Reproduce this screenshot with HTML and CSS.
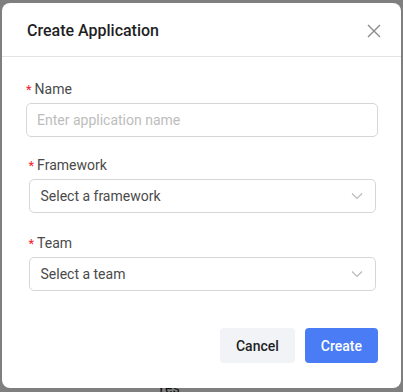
FILE: index.html
```html
<!DOCTYPE html>
<html lang="en">
<head>
    <meta charset="UTF-8">
    <meta name="viewport" content="width=device-width, initial-scale=1.0">
    <title>Create Application</title>
    <link rel="stylesheet" href="styles.css">
</head>
<body>
    <div class="page">
        <div class="page-row">Yes</div>
    </div>

    <div class="overlay">
        <div class="modal">
            <div class="modal-header">
                <h2 class="modal-title">Create Application</h2>
                <button class="close-btn" aria-label="Close">
                    <svg width="14" height="14" viewBox="0 0 14 14">
                        <path d="M1 1 L13 13 M13 1 L1 13" stroke="#8a8a8a" stroke-width="1.4" fill="none"/>
                    </svg>
                </button>
            </div>

            <div class="modal-body">
                <div class="field">
                    <label class="field-label"><span class="req">*</span>Name</label>
                    <input class="text-input" type="text" placeholder="Enter application name">
                </div>

                <div class="field field-inset field-wide">
                    <label class="field-label"><span class="req">*</span>Framework</label>
                    <div class="select">
                        <span>Select a framework</span>
                        <svg width="12" height="8" viewBox="0 0 12 8">
                            <path d="M1 1.5 L6 6.5 L11 1.5" stroke="#b8b8b8" stroke-width="1.1" fill="none"/>
                        </svg>
                    </div>
                </div>

                <div class="field field-inset">
                    <label class="field-label"><span class="req">*</span>Team</label>
                    <div class="select">
                        <span>Select a team</span>
                        <svg width="12" height="8" viewBox="0 0 12 8">
                            <path d="M1 1.5 L6 6.5 L11 1.5" stroke="#b8b8b8" stroke-width="1.1" fill="none"/>
                        </svg>
                    </div>
                </div>
            </div>

            <div class="modal-footer">
                <button class="btn btn-cancel">Cancel</button>
                <button class="btn btn-primary">Create</button>
            </div>
        </div>
    </div>
</body>
</html>
```

FILE: styles.css
```css
* {
    box-sizing: border-box;
}
body {
    margin: 0;
    font-family: Roboto, "Liberation Sans", sans-serif;
    background: #fff;
    overflow: hidden;
}
.page {
    height: 392px;
    padding: 380px 0 0 157px;
}
.page-row {
    font-size: 14px;
    color: #222;
}
.overlay {
    position: fixed;
    inset: 0;
    background: rgba(0, 0, 0, 0.5);
    padding: 3px 2px;
}
.modal {
    width: 399px;
    height: 385px;
    background: #fff;
    border-radius: 8px;
}
.modal-header {
    height: 54px;
    display: flex;
    align-items: center;
    justify-content: space-between;
    padding: 2px 20px 0 25px;
    border-bottom: 1px solid #e3e3e3;
}
.modal-title {
    margin: 0;
    font-size: 16px;
    font-weight: 500;
    color: #1f1f1f;
}
.close-btn {
    background: none;
    border: none;
    padding: 0;
    width: 14px;
    height: 14px;
    cursor: pointer;
    display: flex;
}
.modal-body {
    padding: 21px 23px 0 24px;
}
.field {
    margin-bottom: 17px;
}
.field-wide {
    margin-bottom: 19px;
}
.field-inset {
    padding: 0 2px 0 2.5px;
}
.field-label {
    display: block;
    height: 22px;
    line-height: 22px;
    margin-bottom: 3px;
    font-size: 14px;
    color: #4a4a4a;
}
.req {
    color: #f5222d;
    margin-right: 3px;
    font-size: 13px;
}
.text-input {
    width: 100%;
    height: 34px;
    border: 1px solid #d6d6d6;
    border-radius: 5px;
    padding: 0 10px;
    font-family: inherit;
    font-size: 14px;
    color: #333;
    outline: none;
}
.text-input::placeholder {
    color: #bdbdbd;
}
.select {
    height: 34px;
    border: 1px solid #d6d6d6;
    border-radius: 5px;
    padding: 0 12px 0 11px;
    display: flex;
    align-items: center;
    justify-content: space-between;
    font-size: 14px;
    color: #4a4a4a;
}
.modal-footer {
    display: flex;
    justify-content: flex-end;
    gap: 10px;
    padding: 20px 23px 0 0;
}
.btn {
    height: 35px;
    border: none;
    border-radius: 4px;
    padding: 0 16px;
    font-family: inherit;
    font-size: 14px;
    font-weight: 500;
    cursor: pointer;
}
.btn-cancel {
    background: #f2f3f7;
    color: #1f1f1f;
}
.btn-primary {
    background: #4a7cf6;
    color: #fff;
}
```
